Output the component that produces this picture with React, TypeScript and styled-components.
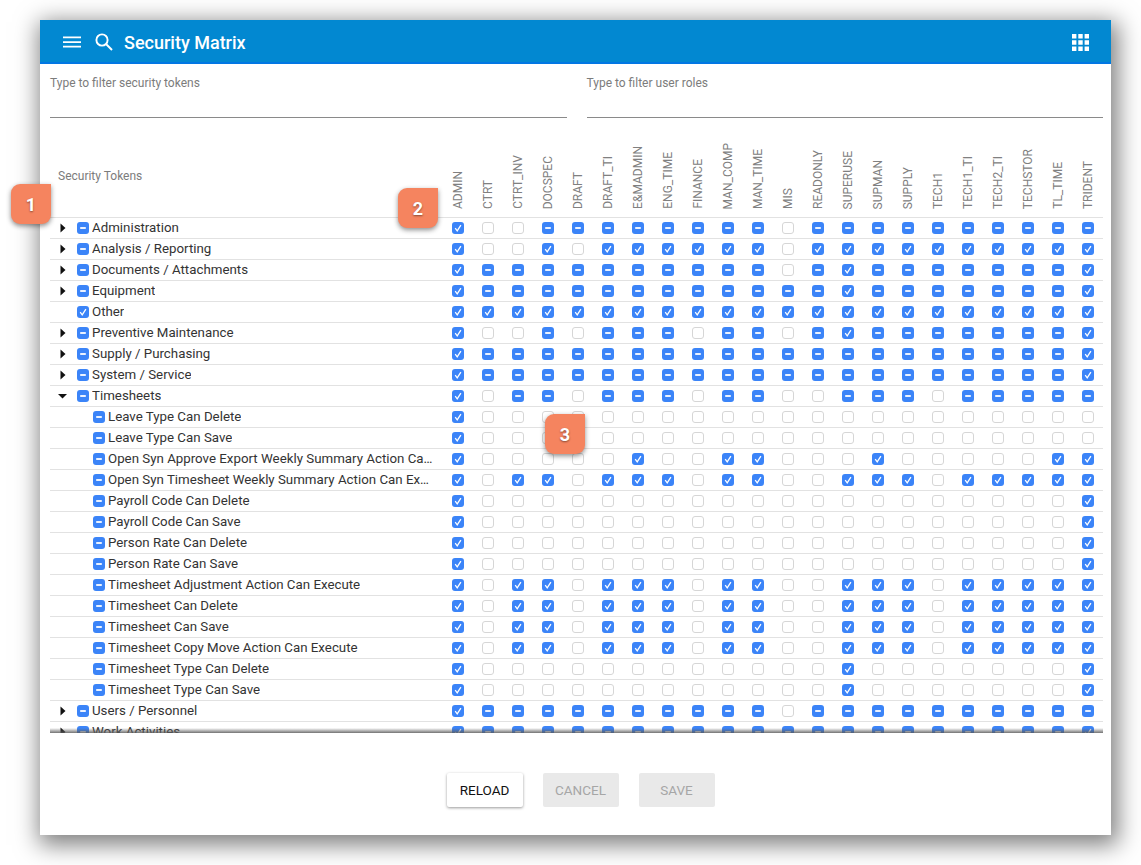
import React from 'react';
import styled, { createGlobalStyle } from 'styled-components';

const GlobalStyle = createGlobalStyle`
  html, body {
    margin: 0;
    padding: 0;
    background: #fff;
    font-family: Roboto, "Liberation Sans", sans-serif;
  }
`;

const ROLES = [
  'ADMIN', 'CTRT', 'CTRT_INV', 'DOCSPEC', 'DRAFT', 'DRAFT_TI', 'E&MADMIN', 'ENG_TIME', 'FINANCE', 'MAN_COMP', 'MAN_TIME',
  'MIS', 'READONLY', 'SUPERUSE', 'SUPMAN', 'SUPPLY', 'TECH1', 'TECH1_TI', 'TECH2_TI', 'TECHSTOR', 'TL_TIME', 'TRIDENT',
];

// c = checked, m = partial, u = empty; one letter per role column
const FULL_TS = 'cuccucccuccuucccuccccc';
const ONLY_ENDS = 'cuuuuuuuuuuuuuuuuuuuuc';
const TYPE_ROW = 'cuuuuuuuuuuuucuuuuuuuc';

type RowData = { label: string; state: string; kind: 'closed' | 'open' | 'leaf' | 'child'; own?: 'c' | 'm' };

const ROWS: RowData[] = [
  { label: 'Administration', kind: 'closed', state: 'cuummmmmmmmummmmmmmmmm' },
  { label: 'Analysis / Reporting', kind: 'closed', state: 'cuucuccccccucccccccccc' },
  { label: 'Documents / Attachments', kind: 'closed', state: 'cmmmmmmmmmmumcmmmmmmmc' },
  { label: 'Equipment', kind: 'closed', state: 'cmmmmmmmmmmmmcmmmmmmmc' },
  { label: 'Other', kind: 'leaf', own: 'c', state: 'cccccccccccccccccccccc' },
  { label: 'Preventive Maintenance', kind: 'closed', state: 'cuumummmummumcmmmmmmmc' },
  { label: 'Supply / Purchasing', kind: 'closed', state: 'cmmmmmmmmmmmmmmmmmmmmc' },
  { label: 'System / Service', kind: 'closed', state: 'cmmmmmmmmmmmmmmmmmmmmc' },
  { label: 'Timesheets', kind: 'open', state: 'cummummmummuummmummmmm' },
  { label: 'Leave Type Can Delete', kind: 'child', state: 'cuuuuuuuuuuuuuuuuuuuuu' },
  { label: 'Leave Type Can Save', kind: 'child', state: 'cuuuuuuuuuuuuuuuuuuuuu' },
  { label: 'Open Syn Approve Export Weekly Summary Action Can Execute', kind: 'child', state: 'cuuuuucuuccuuucuuuuucc' },
  { label: 'Open Syn Timesheet Weekly Summary Action Can Execute', kind: 'child', state: FULL_TS },
  { label: 'Payroll Code Can Delete', kind: 'child', state: ONLY_ENDS },
  { label: 'Payroll Code Can Save', kind: 'child', state: ONLY_ENDS },
  { label: 'Person Rate Can Delete', kind: 'child', state: ONLY_ENDS },
  { label: 'Person Rate Can Save', kind: 'child', state: ONLY_ENDS },
  { label: 'Timesheet Adjustment Action Can Execute', kind: 'child', state: FULL_TS },
  { label: 'Timesheet Can Delete', kind: 'child', state: FULL_TS },
  { label: 'Timesheet Can Save', kind: 'child', state: FULL_TS },
  { label: 'Timesheet Copy Move Action Can Execute', kind: 'child', state: FULL_TS },
  { label: 'Timesheet Type Can Delete', kind: 'child', state: TYPE_ROW },
  { label: 'Timesheet Type Can Save', kind: 'child', state: TYPE_ROW },
  { label: 'Users / Personnel', kind: 'closed', state: 'cmmmmmmmmmmummmmmmmmmm' },
  { label: 'Work Activities', kind: 'closed', state: 'cmmmmmmmmmmmmmmmmmmmmc' },
];

const Page = styled.div`
  padding: 20px 30px 30px 40px;
  width: 1141px;
  height: 865px;
  box-sizing: border-box;
  overflow: hidden;
  position: relative;
`;

const Window = styled.div`
  height: 815px;
  display: flex;
  flex-direction: column;
  background: #fff;
  box-shadow: 3px 6px 22px 4px rgba(0, 0, 0, 0.5);
`;

const AppBar = styled.header`
  height: 40px;
  flex: none;
  display: flex;
  align-items: center;
  padding: 2px 22px 0 22px;
  background: #0288d1;
  border-bottom: 2px solid #0277e3;
  color: #fff;
`;

const IconButton = styled.span<{ $nudge?: number }>`
  display: flex;
  margin-left: ${p => p.$nudge ?? 0}px;
  margin-right: ${p => 11 - (p.$nudge ?? 0)}px;
`;

const Title = styled.h1`
  margin: 0;
  font-size: 18px;
  font-weight: 500;
  flex: 1;
`;

const Filters = styled.div`
  display: flex;
  gap: 20px;
  padding: 12px 8px 0 10px;
  flex: none;
`;

const Filter = styled.label`
  flex: 1;
  height: 41px;
  border-bottom: 1px solid #8a8a8a;
  font-size: 12px;
  line-height: 14px;
  color: #7c7c7c;
`;

const TableHead = styled.div`
  display: flex;
  align-items: flex-end;
  height: 99px;
  margin: 0 8px 0 10px;
  border-bottom: 1px solid #e2e2e2;
  flex: none;
`;

const TokensTitle = styled.div`
  width: 393px;
  box-sizing: border-box;
  padding: 0 0 34px 8px;
  font-size: 12px;
  line-height: 14px;
  color: #7c7c7c;
`;

const RoleHead = styled.div`
  width: 30px;
  display: flex;
  justify-content: center;
  padding-bottom: 8px;
`;

const RoleName = styled.span`
  writing-mode: vertical-rl;
  transform: rotate(180deg);
  font-size: 12px;
  line-height: 14px;
  color: #808080;
  white-space: nowrap;
`;

const Scroller = styled.div`
  position: relative;
  height: 515px;
  margin: 0 8px 0 10px;
  overflow: hidden;
  flex: none;

  &::after {
    content: '';
    position: absolute;
    left: 0;
    right: 0;
    bottom: 0;
    height: 5px;
    background: linear-gradient(to bottom, rgba(90, 90, 90, 0), rgba(90, 90, 90, 0.85));
  }
`;

const Row = styled.div`
  display: flex;
  align-items: center;
  height: 20px;
  border-bottom: 1px solid #e2e2e2;
`;

const NameCell = styled.div<{ $indent: number }>`
  width: 393px;
  box-sizing: border-box;
  display: flex;
  align-items: center;
  padding-left: ${p => p.$indent}px;
  padding-right: 9px;
  font-size: 13.3px;
  color: #333;
`;

const Arrow = styled.span`
  width: 20px;
  flex: none;
  display: flex;
  margin-left: -3px;
`;

const Label = styled.span`
  margin-left: 3px;
  padding-bottom: 2px;
  min-width: 0;
  overflow: hidden;
  white-space: nowrap;
  text-overflow: ellipsis;
`;

const RoleCell = styled.div`
  width: 30px;
  display: flex;
  justify-content: center;
`;

const Box = styled.span<{ $on: boolean }>`
  width: 12px;
  height: 12px;
  flex: none;
  box-sizing: border-box;
  border-radius: 3px;
  display: flex;
  align-items: center;
  justify-content: center;
  background: ${p => (p.$on ? '#3b84f8' : '#fff')};
  border: ${p => (p.$on ? 'none' : '1px solid #d6d6d6')};
`;

const Actions = styled.footer`
  flex: 1;
  display: flex;
  justify-content: center;
  align-items: flex-start;
  gap: 20px;
  padding-top: 40px;
  padding-left: 10px;
`;

const Button = styled.button<{ $enabled?: boolean }>`
  width: 76px;
  height: 34px;
  padding: 0;
  border: none;
  border-radius: 2px;
  font-family: inherit;
  font-size: 13.5px;
  font-weight: 400;
  background: ${p => (p.$enabled ? '#fff' : '#e9e9e9')};
  color: ${p => (p.$enabled ? '#111' : '#a6a6a6')};
  box-shadow: ${p => (p.$enabled ? '0 1px 3px rgba(0, 0, 0, 0.4)' : 'none')};
`;

const Badge = styled.div<{ $x: number; $y: number }>`
  position: absolute;
  left: ${p => p.$x}px;
  top: ${p => p.$y}px;
  width: 40px;
  height: 40px;
  border-radius: 9px 0 9px 9px;
  background: #f5845f;
  color: #fff;
  font-size: 18px;
  font-weight: 700;
  display: flex;
  align-items: center;
  justify-content: center;
  text-shadow: 0 1px 2px rgba(0, 0, 0, 0.45);
  box-shadow: 0 2px 5px rgba(0, 0, 0, 0.45);
`;

function Check({ state }: { state: string }) {
  if (state === 'u') return <Box $on={false} />;
  return (
    <Box $on>
      {state === 'c' ? (
        <svg width="10" height="10" viewBox="0 0 10 10">
          <path d="M2.2 5.2 4.2 7.8 7.9 2.2" fill="none" stroke="#fff" strokeWidth="1.3" />
        </svg>
      ) : (
        <svg width="10" height="10" viewBox="0 0 10 10">
          <path d="M2.2 5h5.6" fill="none" stroke="#fff" strokeWidth="1.8" />
        </svg>
      )}
    </Box>
  );
}

function TreeArrow({ open }: { open: boolean }) {
  return (
    <Arrow>
      <svg width="12" height="12" viewBox="0 0 12 12">
        {open ? <path d="M1 4h9L5.5 8.5z" fill="#111" /> : <path d="M3.5 1.5v9L8.5 6z" fill="#111" />}
      </svg>
    </Arrow>
  );
}

export default function App() {
  return (
    <Page>
      <GlobalStyle />
      <Window>
        <AppBar>
          <IconButton>
            <svg width="20" height="20" viewBox="0 0 20 20" fill="#fff">
              <path d="M1 4.5h18v1.7H1zM1 9.2h18v1.7H1zM1 13.8h18v1.7H1z" />
            </svg>
          </IconButton>
          <IconButton $nudge={1}>
            <svg width="20" height="20" viewBox="0 0 20 20" fill="none" stroke="#fff" strokeWidth="1.9">
              <circle cx="8" cy="8" r="5.6" />
              <path d="M12 12l6 6" />
            </svg>
          </IconButton>
          <Title>Security Matrix</Title>
          <svg width="17" height="17" viewBox="0 0 17 17" fill="#fff">
            <path d="M0 0h4.4v4.4H0zM6.3 0h4.4v4.4H6.3zM12.6 0H17v4.4h-4.4zM0 6.3h4.4v4.4H0zM6.3 6.3h4.4v4.4H6.3zM12.6 6.3H17v4.4h-4.4zM0 12.6h4.4V17H0zM6.3 12.6h4.4V17H6.3zM12.6 12.6H17V17h-4.4z" />
          </svg>
        </AppBar>
        <Filters>
          <Filter>Type to filter security tokens</Filter>
          <Filter>Type to filter user roles</Filter>
        </Filters>
        <TableHead>
          <TokensTitle>Security Tokens</TokensTitle>
          {ROLES.map(role => (
            <RoleHead key={role}>
              <RoleName>{role}</RoleName>
            </RoleHead>
          ))}
        </TableHead>
        <Scroller>
          {ROWS.map(row => (
            <Row key={row.label}>
              <NameCell $indent={row.kind === 'child' ? 43 : 10}>
                {row.kind === 'closed' && <TreeArrow open={false} />}
                {row.kind === 'open' && <TreeArrow open />}
                {row.kind === 'leaf' && <Arrow />}
                <Check state={row.own ?? 'm'} />
                <Label>{row.label}</Label>
              </NameCell>
              {ROLES.map((role, i) => (
                <RoleCell key={role}>
                  <Check state={row.state[i]} />
                </RoleCell>
              ))}
            </Row>
          ))}
        </Scroller>
        <Actions>
          <Button $enabled>RELOAD</Button>
          <Button>CANCEL</Button>
          <Button>SAVE</Button>
        </Actions>
      </Window>
      <Badge $x={11} $y={184}>1</Badge>
      <Badge $x={398} $y={188}>2</Badge>
      <Badge $x={545} $y={414}>3</Badge>
    </Page>
  );
}
